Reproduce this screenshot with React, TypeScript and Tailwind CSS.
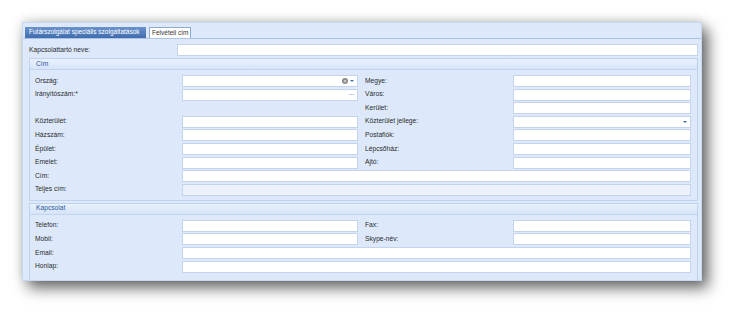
import React from 'react';

type Cell = { label: string; kind?: 'combo' | 'dots' | 'arrow' | 'disabled' };

const CIM_ROWS: [Cell | null, Cell | null][] = [
  [{ label: 'Ország:', kind: 'combo' }, { label: 'Megye:' }],
  [{ label: 'Irányítószám:*', kind: 'dots' }, { label: 'Város:' }],
  [null, { label: 'Kerület:' }],
  [{ label: 'Közterület:' }, { label: 'Közterület jellege:', kind: 'arrow' }],
  [{ label: 'Házszám:' }, { label: 'Postafiók:' }],
  [{ label: 'Épület:' }, { label: 'Lépcsőház:' }],
  [{ label: 'Emelet:' }, { label: 'Ajtó:' }],
];

const KAPCS_ROWS: [Cell | null, Cell | null][] = [
  [{ label: 'Telefon:' }, { label: 'Fax:' }],
  [{ label: 'Mobil:' }, { label: 'Skype-név:' }],
];

function Field({ kind, wide }: { kind?: Cell['kind']; wide?: boolean }) {
  return (
    <div
      className={`flex h-[12px] items-center justify-end border border-[#c4d4ec] pr-[3px] ${
        kind === 'disabled' ? 'bg-[#edf1f9]' : 'bg-white'
      } ${wide ? 'col-span-3' : ''}`}
    >
      {kind === 'combo' && (
        <>
          <span className="flex h-[6px] w-[6px] items-center justify-center rounded-full bg-[#8a8a8a] text-[5px] leading-none text-white">
            ×
          </span>
          <span className="ml-[2px] h-0 w-0 border-x-[2px] border-t-[2px] border-x-transparent border-t-[#4a6fa5]" />
        </>
      )}
      {kind === 'dots' && <span className="text-[7px] leading-none tracking-[-0.5px] text-[#3a66b0]">···</span>}
      {kind === 'arrow' && (
        <span className="h-0 w-0 border-x-[2px] border-t-[2px] border-x-transparent border-t-[#3a66b0]" />
      )}
    </div>
  );
}

function Label({ text, right }: { text: string; right?: boolean }) {
  return (
    <div className={`flex h-[12px] items-center text-[6.7px] leading-none text-[#2a2a2a] ${right ? 'pl-[7px]' : ''}`}>
      {text}
    </div>
  );
}

function Rows({ rows }: { rows: [Cell | null, Cell | null][] }) {
  return (
    <>
      {rows.map(([l, r], i) => (
        <React.Fragment key={i}>
          {l ? <Label text={l.label} /> : <div />}
          {l ? <Field kind={l.kind} /> : <div />}
          {r ? <Label text={r.label} right /> : <div />}
          {r ? <Field kind={r.kind} /> : <div />}
        </React.Fragment>
      ))}
    </>
  );
}

function Group({ title, open, children }: { title: string; open?: boolean; children: React.ReactNode }) {
  return (
    <div className={`border border-[#bfd2ee] ${open ? 'flex-1 border-b-0' : ''}`}>
      <div className="flex h-[11px] items-center border-b border-[#c2d4ef] bg-gradient-to-b from-[#e9f1fd] to-[#d6e4f8] pl-[6px] text-[6.7px] leading-none text-[#2c57a2]">
        {title}
      </div>
      <div className="grid grid-cols-[147px_176px_155px_178px] auto-rows-[12px] gap-y-[1.6px] pb-[4px] pl-[5px] pr-[4px] pt-[5px]">
        {children}
      </div>
    </div>
  );
}

export default function App() {
  return (
    <div className="h-[322px] w-[743px] overflow-hidden bg-white pl-[22px] pt-[22px] font-['Liberation_Sans',Arial,sans-serif]">
      <div className="flex h-[259px] w-[680px] flex-col overflow-hidden border border-[#c6d8f1] bg-[#dde9fb] shadow-[6px_7px_14px_rgba(0,0,0,0.6),0_-2px_10px_rgba(0,0,0,0.12)]">
        {/* Tabs */}
        <div className="flex h-[16px] shrink-0 items-end gap-[3px] border-b border-[#aac3e7] pl-[2px]">
          <div className="flex h-[11px] w-[121px] items-center bg-gradient-to-b from-[#6a93cc] to-[#3f6cae] pl-[4px] text-[6.5px] leading-none text-white">
            Futárszolgálat speciális szolgáltatások
          </div>
          <div className="flex h-[11px] w-[42px] items-center border border-b-0 border-[#8eaad3] bg-white pl-[2px] text-[6.5px] leading-none text-[#333]">
            Felvételi cím
          </div>
        </div>

        {/* Body */}
        <div className="flex flex-1 flex-col gap-[2px] pl-[6px] pr-[3px] pt-[5px]">
          <div className="flex h-[12px] items-center">
            <div className="w-[148px] text-[6.7px] leading-none text-[#2a2a2a]">Kapcsolattartó neve:</div>
            <div className="h-[12px] flex-1 border border-[#c4d4ec] bg-white" />
          </div>

          <Group title="Cím">
            <Rows rows={CIM_ROWS} />
            <Label text="Cím:" />
            <Field wide />
            <Label text="Teljes cím:" />
            <Field wide kind="disabled" />
          </Group>

          <Group title="Kapcsolat" open>
            <Rows rows={KAPCS_ROWS} />
            <Label text="Email:" />
            <Field wide />
            <Label text="Honlap:" />
            <Field wide />
          </Group>
        </div>
      </div>
    </div>
  );
}
